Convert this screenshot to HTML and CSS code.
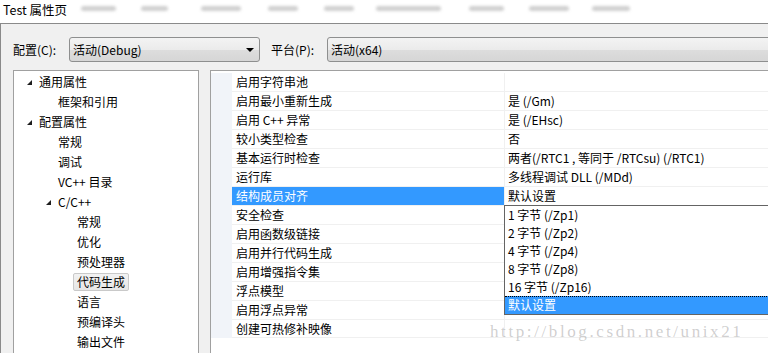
FILE: index.html
```html
<!DOCTYPE html>
<html lang="zh-CN">
<head>
    <meta charset="UTF-8">
    <title>Test 属性页</title>
    <link rel="stylesheet" href="styles.css">
</head>
<body>
    <!-- Titelbalk -->
    <div class="titlebar">
        <span class="title">Test 属性页</span>
        <div class="blurred">
            <span class="blob" style="margin-left:14px;width:35px"></span>
            <span class="blob" style="margin-left:25px;width:27px"></span>
            <span class="blob" style="margin-left:33px;width:40px"></span>
            <span class="blob" style="margin-left:27px;width:30px"></span>
            <span class="blob" style="margin-left:26px;width:30px"></span>
            <span class="blob" style="margin-left:22px;width:65px"></span>
            <span class="blob" style="margin-left:28px;width:35px"></span>
            <span class="blob" style="margin-left:25px;width:40px"></span>
            <span class="blob" style="margin-left:23px;width:38px"></span>
        </div>
    </div>

    <div class="dialog">
        <!-- Configuratie balk -->
        <div class="toolbar">
            <label class="field-label">配置(C):</label>
            <div class="combo config">
                <span>活动(Debug)</span>
                <span class="combo-arrow"></span>
            </div>
            <label class="field-label platform-label">平台(P):</label>
            <div class="combo platform">
                <span>活动(x64)</span>
            </div>
        </div>

        <div class="main">
            <!-- Boom links -->
            <div class="tree">
                <div class="node lvl0"><span class="twisty open"></span>通用属性</div>
                <div class="node lvl1"><span class="twisty"></span>框架和引用</div>
                <div class="node lvl0"><span class="twisty open"></span>配置属性</div>
                <div class="node lvl1"><span class="twisty"></span>常规</div>
                <div class="node lvl1"><span class="twisty"></span>调试</div>
                <div class="node lvl1"><span class="twisty"></span>VC++ 目录</div>
                <div class="node lvl1"><span class="twisty open"></span>C/C++</div>
                <div class="node lvl2"><span class="twisty"></span>常规</div>
                <div class="node lvl2"><span class="twisty"></span>优化</div>
                <div class="node lvl2"><span class="twisty"></span>预处理器</div>
                <div class="node lvl2"><span class="twisty"></span><span class="node-text selected">代码生成</span></div>
                <div class="node lvl2"><span class="twisty"></span>语言</div>
                <div class="node lvl2"><span class="twisty"></span>预编译头</div>
                <div class="node lvl2"><span class="twisty"></span>输出文件</div>
            </div>

            <!-- Eigenschappen rechts -->
            <div class="props-panel">
                <div class="props">
                    <div class="gutter"></div>
                    <div class="rows">
                        <div class="row"><div class="name">启用字符串池</div><div class="value"></div></div>
                        <div class="row"><div class="name">启用最小重新生成</div><div class="value">是 (/Gm)</div></div>
                        <div class="row"><div class="name">启用 C++ 异常</div><div class="value">是 (/EHsc)</div></div>
                        <div class="row"><div class="name">较小类型检查</div><div class="value">否</div></div>
                        <div class="row"><div class="name">基本运行时检查</div><div class="value">两者(/RTC1 , 等同于 /RTCsu) (/RTC1)</div></div>
                        <div class="row"><div class="name">运行库</div><div class="value">多线程调试 DLL (/MDd)</div></div>
                        <div class="row active">
                            <div class="name">结构成员对齐</div>
                            <div class="value">默认设置
                                <div class="dropdown">
                                    <div class="option">1 字节 (/Zp1)</div>
                                    <div class="option">2 字节 (/Zp2)</div>
                                    <div class="option">4 字节 (/Zp4)</div>
                                    <div class="option">8 字节 (/Zp8)</div>
                                    <div class="option">16 字节 (/Zp16)</div>
                                    <div class="option current">默认设置</div>
                                </div>
                            </div>
                        </div>
                        <div class="row"><div class="name">安全检查</div><div class="value"></div></div>
                        <div class="row"><div class="name">启用函数级链接</div><div class="value"></div></div>
                        <div class="row"><div class="name">启用并行代码生成</div><div class="value"></div></div>
                        <div class="row"><div class="name">启用增强指令集</div><div class="value"></div></div>
                        <div class="row"><div class="name">浮点模型</div><div class="value"></div></div>
                        <div class="row"><div class="name">启用浮点异常</div><div class="value"></div></div>
                        <div class="row last"><div class="name">创建可热修补映像</div><div class="value"></div></div>
                    </div>
                </div>
                <div class="watermark">http://blog.csdn.net/unix21</div>
            </div>
        </div>
    </div>
</body>
</html>
```

FILE: styles.css
```css
/* Basis */
* {
    margin: 0;
    padding: 0;
    box-sizing: border-box;
}

body {
    width: 768px;
    height: 353px;
    overflow: hidden;
    background-color: #ffffff;
    color: #000000;
    font-family: "Noto Sans CJK SC", sans-serif;
    font-size: 12px;
}

/* Titelbalk */
.titlebar {
    height: 23px;
    display: flex;
    align-items: center;
    padding-left: 3px;
    background-color: #ffffff;
}

.title {
    font-size: 12.5px;
    line-height: 16px;
    margin-top: -4px;
}

.blurred {
    display: flex;
    margin-top: -6px;
}

.blob {
    display: block;
    height: 5px;
    background-color: #c4c4c4;
    border-radius: 3px;
    filter: blur(1.5px);
    opacity: 0.8;
}

/* Dialoog */
.dialog {
    width: 800px;
    height: 330px;
    border-top: 1px solid #8a8a8a;
    border-left: 1px solid #8a8a8a;
    background-color: #f0f0f0;
    padding: 13px 0 0 12px;
}

.toolbar {
    display: flex;
    align-items: center;
    height: 25px;
}

.field-label {
    flex-shrink: 0;
    width: 56px;
    line-height: 25px;
}

.platform-label {
    width: 56px;
    margin-left: 11px;
}

.combo {
    position: relative;
    flex-shrink: 0;
    height: 25px;
    display: flex;
    align-items: center;
    padding-left: 3px;
    border: 1px solid #8e8f8f;
    border-radius: 3px;
    background: linear-gradient(#f3f3f3, #ebebeb 50%, #dddddd 50%, #d6d6d6);
}

.combo.config {
    width: 191px;
}

.combo.platform {
    width: 470px;
}

.combo-arrow {
    position: absolute;
    right: 5px;
    top: 10px;
    border-left: 4px solid transparent;
    border-right: 4px solid transparent;
    border-top: 4px solid #000000;
}

.main {
    display: flex;
    gap: 11px;
    margin-top: 8px;
    height: 300px;
}

/* Boom */
.tree {
    flex-shrink: 0;
    width: 186px;
    padding-top: 1px;
    background-color: #ffffff;
    border: 1px solid #a0a0a0;
}

.node {
    display: flex;
    align-items: center;
    height: 20px;
    line-height: 18px;
}

.node.lvl0 { padding-left: 12px; }
.node.lvl1 { padding-left: 31px; }
.node.lvl2 { padding-left: 50px; }

.twisty {
    width: 13px;
    flex-shrink: 0;
}

.twisty.open::before {
    content: "";
    display: block;
    width: 0;
    height: 0;
    margin-left: 1px;
    border-left: 5px solid transparent;
    border-bottom: 5px solid #1e1e1e;
}

.node-text.selected {
    margin-left: -4px;
    padding: 0 3px 0 3px;
    height: 18px;
    border: 1px solid #c9c9c9;
    border-radius: 2px;
    background: linear-gradient(#f2f2f2, #e6e6e6);
    line-height: 16px;
}

/* Eigenschappen */
.props-panel {
    position: relative;
    flex-shrink: 0;
    width: 570px;
    padding-top: 2px;
    background-color: #ffffff;
    border-top: 1px solid #a0a0a0;
    border-left: 1px solid #a0a0a0;
}

.props {
    display: flex;
}

.gutter {
    width: 21px;
    background-color: #f1f4f9;
}

.rows {
    flex: 1;
}

.row {
    display: grid;
    grid-template-columns: 273px 1fr;
    height: 19px;
    border-bottom: 1px solid #f0f0f0;
    line-height: 18px;
}

.row.last {
    height: 18px;
}

.name {
    padding-left: 4px;
    border-right: 1px solid #f0f0f0;
    white-space: nowrap;
}

.value {
    position: relative;
    padding-left: 3px;
    white-space: nowrap;
}

.row.active .name {
    background-color: #3399ff;
    color: #ffffff;
}

/* Keuzelijst */
.dropdown {
    position: absolute;
    top: 100%;
    left: -1px;
    right: -10px;
    height: 110px;
    background-color: #ffffff;
    border: 1px solid #646464;
    z-index: 10;
}

.option {
    height: 18px;
    line-height: 18px;
    padding-left: 3px;
}

.option.current {
    background-color: #3399ff;
    color: #ffffff;
    border-top: 1px dotted #000000;
    line-height: 16px;
    height: 18px;
}

.watermark {
    position: absolute;
    left: 279px;
    top: 251px;
    font-family: "Liberation Serif", serif;
    font-size: 17px;
    letter-spacing: 2.6px;
    color: rgba(140, 140, 140, 0.42);
    z-index: 20;
    white-space: nowrap;
}
```
